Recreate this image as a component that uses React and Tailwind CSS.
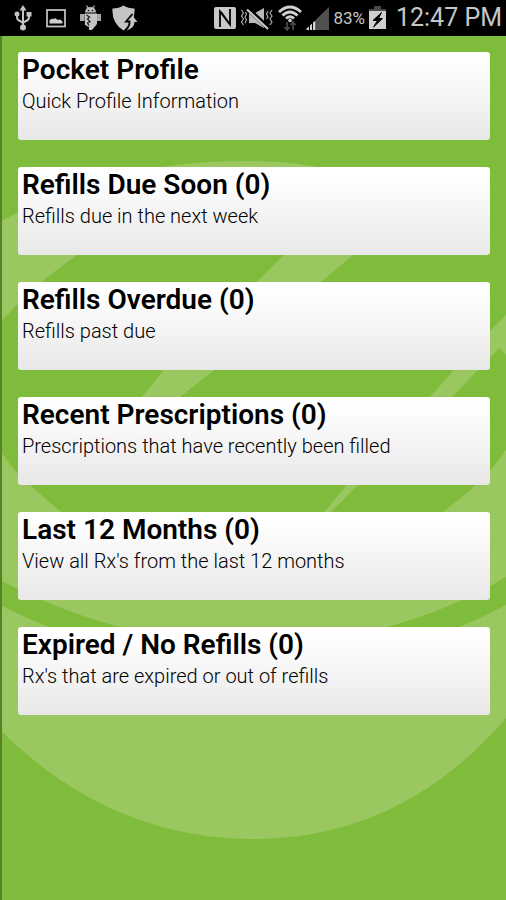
import React from "react";

const menuItems = [
  { title: "Pocket Profile", text: "Quick Profile Information" },
  { title: "Refills Due Soon (0)", text: "Refills due in the next week" },
  { title: "Refills Overdue (0)", text: "Refills past due" },
  {
    title: "Recent Prescriptions (0)",
    text: "Prescriptions that have recently been filled",
  },
  { title: "Last 12 Months (0)", text: "View all Rx's from the last 12 months" },
  {
    title: "Expired / No Refills (0)",
    text: "Rx's that are expired or out of refills",
  },
];

const UsbIcon = () => (
  <svg viewBox="-2 0 22 26" className="h-[26px] w-[22px]" fill="none" stroke="#c4c4c4" strokeWidth="2">
    <path d="M9 4V22M3 9V12Q3 15 6 16L9 18M15 9V12Q15 15 12 16L9 18" />
    <path d="M9 0L12.5 5.5H5.5Z" fill="#c4c4c4" stroke="none" />
    <circle cx="3" cy="9" r="2.5" fill="#c4c4c4" stroke="none" />
    <rect x="12.5" y="7" width="5" height="4.5" fill="#c4c4c4" stroke="none" />
    <circle cx="9" cy="22.5" r="3" fill="#c4c4c4" stroke="none" />
  </svg>
);

const PictureIcon = () => (
  <svg viewBox="-2 0 24 26" className="h-[26px] w-6">
    <rect x="1" y="5" width="18" height="16.5" fill="none" stroke="#bdbdbd" strokeWidth="1.8" />
    <path d="M3.5 18.5V15.5Q5 13 7.5 14Q9.5 12 11.5 15Q14 13.5 16.5 16.5V18.5Z" fill="#cfcfcf" />
  </svg>
);

const DebugIcon = () => (
  <svg viewBox="-2 0 24 26" className="h-[26px] w-6">
    <path d="M6.5 0.5L8 3M14.5 0.5L13 3" stroke="#bdbdbd" strokeWidth="1.2" />
    <path d="M5 7.5Q5.5 2 10.5 2T16 7.5Z" fill="#bdbdbd" />
    <path d="M0 9H4.5V16H0ZM17 9H21V16H17Z" fill="#a8a8a8" />
    <path d="M4.5 8.5H17V19L12 25H9V22L5 20Z" fill="#c4c4c4" />
    <path d="M6.5 10L9.5 12L7.5 14L10 16.5L7.5 18L9 20.5" fill="none" stroke="#222" strokeWidth="1.3" />
    <circle cx="8.5" cy="5.5" r="0.8" fill="#000" />
    <circle cx="12.5" cy="5.5" r="0.8" fill="#000" />
  </svg>
);

const ShieldIcon = () => (
  <svg viewBox="0 0 26 26" className="h-[26px] w-[26px]">
    <path d="M11.5 0.5Q16 3.5 22.5 3.5Q23.5 18 11.5 25.5Q-0.5 18 0.5 3.5Q7 3.5 11.5 0.5Z" fill="#c4c4c4" />
    <path
      d="M20 10L25.5 17H22.5Q22.5 23 14.5 25.5Q18 21 17.5 17H14.5Z"
      fill="#c4c4c4"
    />
    <path
      d="M20.5 9L14 16.5H17.5Q18 21 13.5 25"
      fill="none"
      stroke="#000"
      strokeWidth="1.8"
    />
  </svg>
);

const NfcIcon = () => (
  <svg viewBox="0 0 22 26" className="h-[26px] w-[22px]">
    <rect x="0" y="2" width="22" height="22" rx="2" fill="#c8c8c8" />
    <path d="M6 22V6.5L15.5 19M16 4V19.5L7 7" fill="none" stroke="#000" strokeWidth="1.8" />
  </svg>
);

const MuteIcon = () => (
  <svg viewBox="0 0 34 26" className="h-[26px] w-[34px]">
    <path d="M9 8H15L24 3V23L15 18H9Z" fill="#b8b8b8" />
    <path d="M8 4L29 23.5" stroke="#000" strokeWidth="4.5" />
    <path d="M7 4.5L28 24" stroke="#c8c8c8" strokeWidth="2.2" />
    <path
      d="M1.5 5L3.5 8L1.5 11L3.5 14L1.5 17L3.5 20M5.5 7L6.5 9L5 12L6.5 15L5 18M32 5L30 8L32 11L30 14L32 17L30 20M28 6L26.5 9L28 12L26.5 14"
      fill="none"
      stroke="#aaa"
      strokeWidth="1.2"
    />
  </svg>
);

const WifiIcon = () => (
  <svg viewBox="0 0 24 26" className="h-[26px] w-6" fill="none" stroke="#d0d0d0" strokeWidth="2.8">
    <path d="M1 7Q12 -3 23 7M4.5 10.5Q12 3.5 19.5 10.5M8 13.5Q12 10 16 13.5" />
    <circle cx="12" cy="15.5" r="1.8" fill="#d0d0d0" stroke="none" />
    <path d="M9 25V17M6.5 22L9 25L11.5 22M15 25V17M12.5 20L15 17L17.5 20" stroke="#484848" strokeWidth="1.8" />
  </svg>
);

const SignalIcon = () => (
  <svg viewBox="0 0 23 26" className="h-[26px] w-[23px]">
    <path d="M10 14.5L23 2V25H10Z" fill="#505050" />
    <path d="M0.5 23.5L3 21.5V25H0.5ZM4 20.5L6 18.5V25H4ZM7 17.5L9.5 15.5V25H7Z" fill="#d4d4d4" />
  </svg>
);

const BatteryIcon = () => (
  <svg viewBox="0 0 17 26" className="h-[26px] w-[17px]">
    <path d="M5 1H12V4H17V8H0V4H5Z" fill="#484848" />
    <rect x="0" y="6" width="17" height="18" fill="#cfcfcf" />
    <path d="M12.5 7.5L4 15.5H8.5L4.5 22L13.5 13.5H9.5Z" fill="#000" stroke="#000" />
  </svg>
);

const StatusBar = () => (
  <header className="flex h-9 items-center justify-between bg-black pr-1 pl-3 font-[Roboto,sans-serif] text-[#c6c6c6]">
    <div className="flex items-center gap-2.5">
      <UsbIcon />
      <PictureIcon />
      <DebugIcon />
      <ShieldIcon />
    </div>
    <div className="flex items-center gap-1">
      <NfcIcon />
      <MuteIcon />
      <WifiIcon />
      <SignalIcon />
      <span className="text-[17px] leading-9">83%</span>
      <BatteryIcon />
      <time className="pl-1.5 text-[25px] leading-9">12:47 PM</time>
    </div>
  </header>
);

// Pale pharmacy emblem that sits behind the list
const Emblem = () => (
  <svg
    viewBox="0 0 504 864"
    className="col-start-1 row-start-1 block w-full"
    fill="#9ac760"
    aria-hidden="true"
  >
    <path d="M0 185Q105 125 243 125Q300 125 340 137L350 220L320 245L211 335L178 361L100 400L140 361L161 335L256 245L281 220L250 150L74 220Q30 250 0 285Z" />
    <path d="M504 279L488 295L451 335L428 361L345 449L322 476L300 505L329 476L356 449L450 361L475 335L488 321L498 312L504 319Z" />
    <path d="M0 417Q12 436 28 449Q130 545 250 545Q350 545 441 476Q484 444 504 414V541Q390 608 252 608Q120 608 0 545Z" />
    <path d="M0 570Q120 630 251 630Q390 630 504 569V682Q400 803 251 803Q110 803 0 696Z" />
  </svg>
);

const MenuCard = ({ title, text }) => (
  <button
    type="button"
    className="flex h-[88px] w-full flex-col items-start rounded-[3px] bg-linear-to-b from-white from-10% to-[#e8e8e8] px-1 text-left text-black"
  >
    <span className="text-[28px] leading-9 font-semibold">{title}</span>
    <span className="text-[20px] leading-[26px] font-light">{text}</span>
  </button>
);

const App = () => (
  <div className="flex min-h-screen flex-col bg-[#80bc3c] font-[Roboto,sans-serif]">
    <StatusBar />
    <main className="grid flex-1 items-start border-l-2 border-[#55822a]">
      <Emblem />
      <nav className="col-start-1 row-start-1 flex flex-col gap-[27px] p-4">
        {menuItems.map((item) => (
          <MenuCard key={item.title} title={item.title} text={item.text} />
        ))}
      </nav>
    </main>
  </div>
);

export default App;
